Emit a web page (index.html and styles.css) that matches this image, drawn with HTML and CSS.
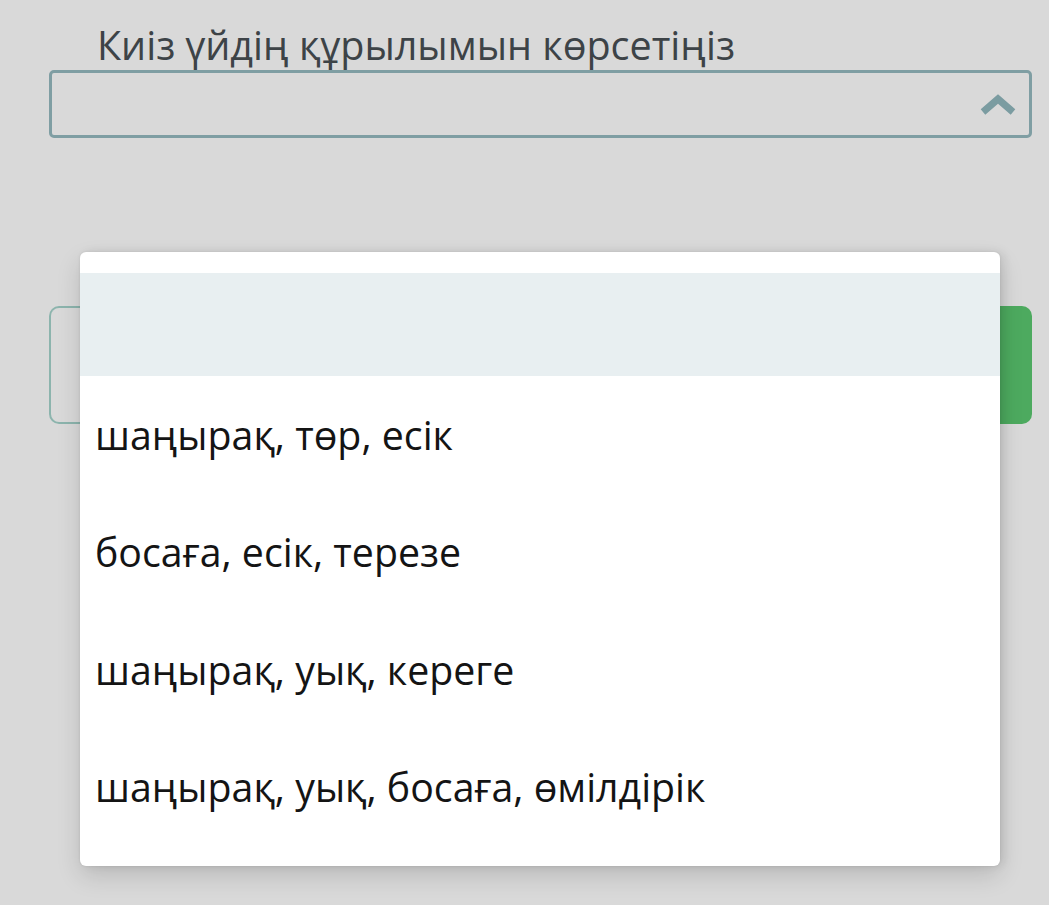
FILE: index.html
```html
<!DOCTYPE html>
<html lang="kk">
<head>
  <meta charset="UTF-8">
  <meta name="viewport" content="width=device-width, initial-scale=1">
  <title>Киіз үйдің құрылымы</title>
  <link rel="stylesheet" href="styles.css">
</head>
<body>
  <div class="question">
    <h2 class="question-title">Киіз үйдің құрылымын көрсетіңіз</h2>
    <div class="select-box">
      <svg class="chevron" width="38" height="24" viewBox="0 0 38 24">
        <path d="M4 19 L19 6 L34 19" fill="none" stroke="#7b9ca1" stroke-width="7" stroke-linejoin="miter"/>
      </svg>
    </div>
    <div class="answer-row">
      <div class="answer-box"></div>
      <button class="check-btn"></button>
    </div>
  </div>

  <ul class="dropdown">
    <li class="option active"></li>
    <li class="option">шаңырақ, төр, есік</li>
    <li class="option">босаға, есік, терезе</li>
    <li class="option">шаңырақ, уық, кереге</li>
    <li class="option">шаңырақ, уық, босаға, өмілдірік</li>
  </ul>
</body>
</html>
```

FILE: styles.css
```css
body {
  margin: 0;
  background: #d9d9d9;
  font-family: "Open Sans", "Noto Sans", sans-serif;
  color: #3d4347;
}

.question {
  padding: 20px 17px 0 49px;
}

.question-title {
  margin: 0 0 0 48px;
  font-size: 39.5px;
  font-weight: normal;
  line-height: 50px;
  position: relative;
  z-index: 1;
}

.select-box {
  height: 62px;
  border: 3px solid #7f9ea3;
  border-radius: 5px;
  display: flex;
  align-items: center;
  justify-content: flex-end;
  padding-right: 12px;
}

.chevron {
  margin-top: 2px;
}

.answer-row {
  display: flex;
  margin-top: 168px;
  height: 118px;
}

.answer-box {
  flex: 1;
  border: 2px solid #8cb4ad;
  border-right: none;
  border-radius: 10px 0 0 10px;
}

.check-btn {
  width: 90px;
  border: none;
  border-radius: 0 10px 10px 0;
  background: #4daa5f;
}

.dropdown {
  position: absolute;
  left: 80px;
  top: 252px;
  width: 920px;
  margin: 0;
  padding: 21px 0 20px;
  list-style: none;
  background: #fff;
  border-radius: 6px;
  box-shadow: 0 10px 24px rgba(0, 0, 0, 0.14), 4px 0 10px rgba(0, 0, 0, 0.08), 0 0 3px rgba(0, 0, 0, 0.08);
}

.option {
  height: 117.5px;
  padding-left: 15px;
  display: flex;
  align-items: center;
  font-size: 39.3px;
  color: #141414;
}

.option.active {
  height: 103px;
  background: #e8eff1;
}
```
